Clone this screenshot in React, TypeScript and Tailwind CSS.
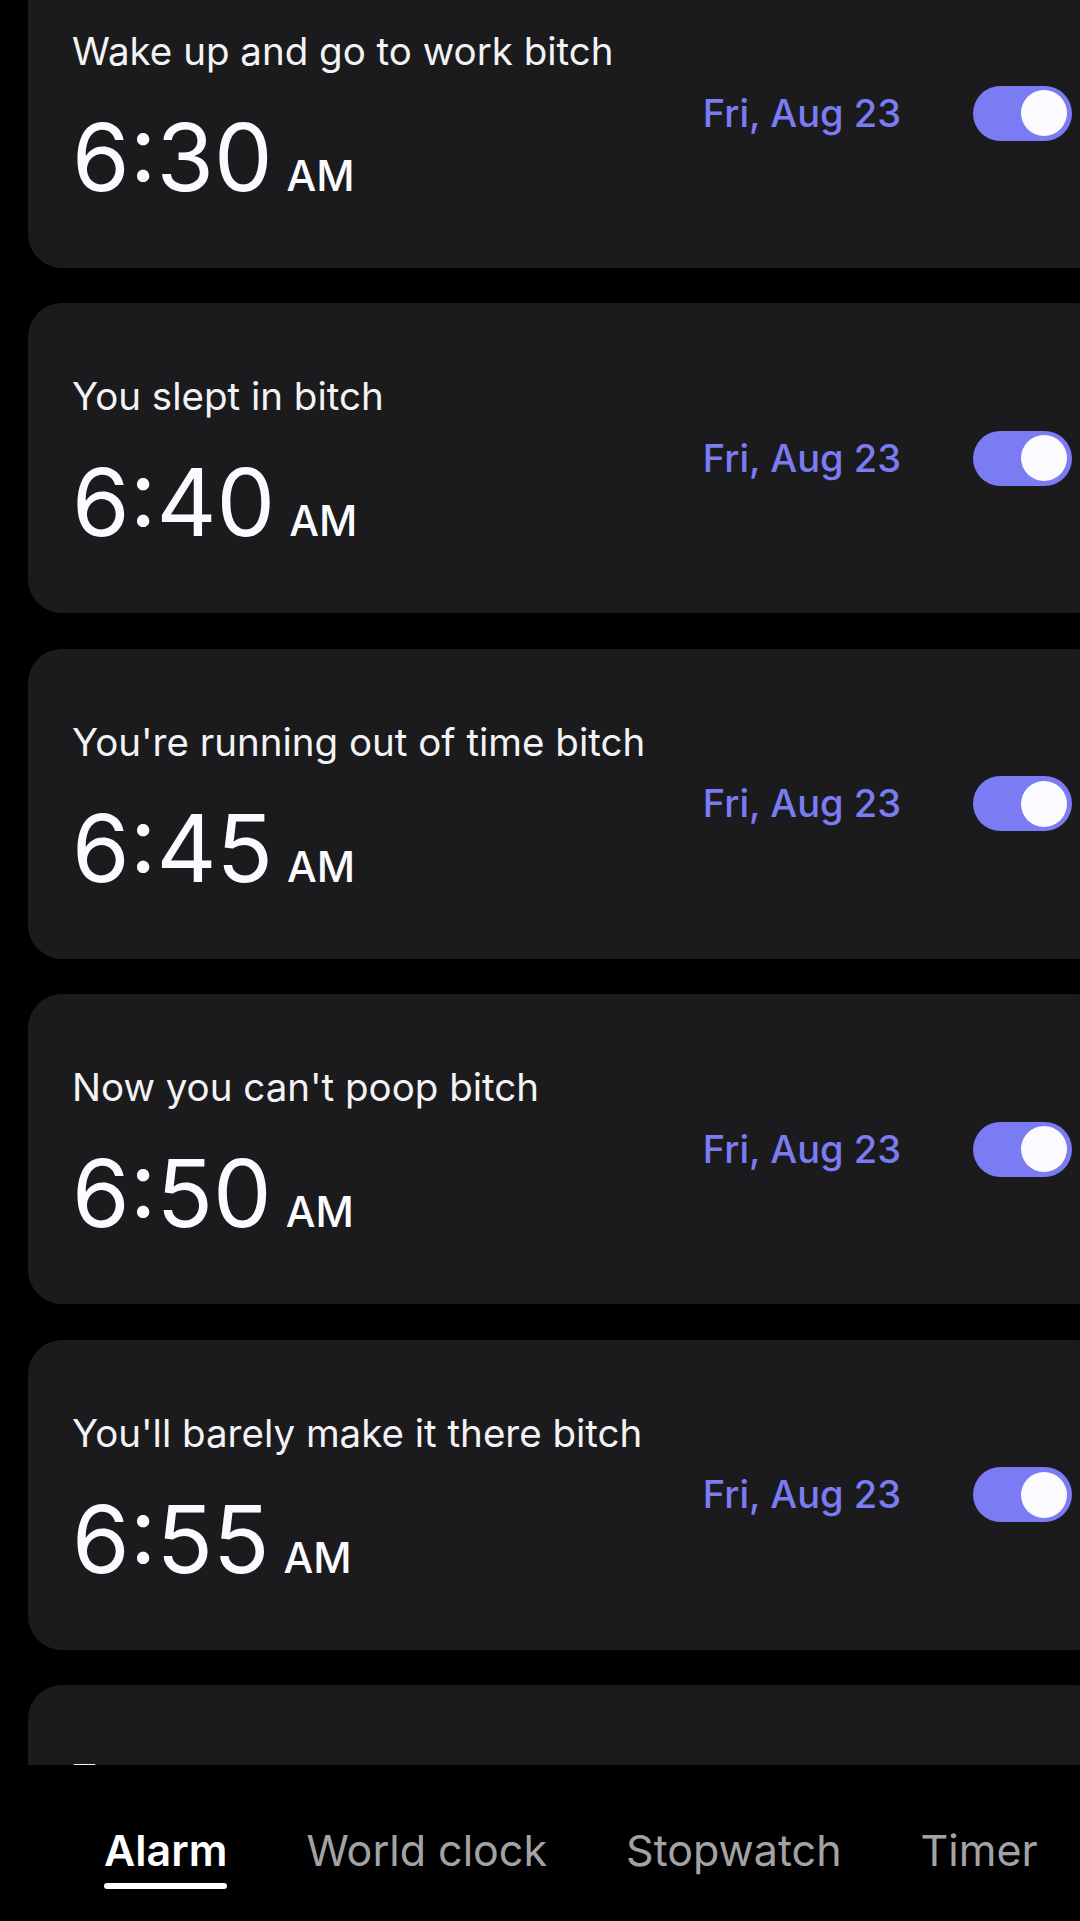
import { useState } from 'react';

type Alarm = {
  id: number;
  label: string;
  time: string;
  date: string;
  on: boolean;
};

const ALARMS: Alarm[] = [
  { id: 1, label: 'Wake up and go to work bitch', time: '6:30', date: 'Fri, Aug 23', on: true },
  { id: 2, label: 'You slept in bitch', time: '6:40', date: 'Fri, Aug 23', on: true },
  { id: 3, label: "You're running out of time bitch", time: '6:45', date: 'Fri, Aug 23', on: true },
  { id: 4, label: "Now you can't poop bitch", time: '6:50', date: 'Fri, Aug 23', on: true },
  { id: 5, label: "You'll barely make it there bitch", time: '6:55', date: 'Fri, Aug 23', on: true },
  { id: 6, label: 'Too many excuses', time: '7:00', date: 'Fri, Aug 23', on: true },
];

const TABS = ['Alarm', 'World clock', 'Stopwatch', 'Timer'];

function Toggle({ on, onChange }: { on: boolean; onChange: () => void }) {
  return (
    <button
      onClick={onChange}
      className={`flex h-[55px] w-[99px] shrink-0 items-center rounded-full px-[5px] ${
        on ? 'justify-end bg-[#7b7bf3]' : 'justify-start bg-[#55555a]'
      }`}
    >
      <span className="block h-[46px] w-[46px] rounded-full bg-[#fbfbff]" />
    </button>
  );
}

function AlarmCard({ alarm, onToggle }: { alarm: Alarm; onToggle: () => void }) {
  return (
    <div className="ml-[28px] flex h-[310px] w-[1080px] shrink-0 items-center rounded-[34px] bg-[#1b1b1e] pl-[44px] pr-[36px]">
      <div className="flex flex-1 flex-col self-start pt-[70px]">
        <div className="text-[38.5px] leading-[46px] text-[#f3f3f5]">{alarm.label}</div>
        <div className="mt-[36px] flex items-baseline text-[#fbfbff]">
          <span className="text-[93px] leading-[95px]">{alarm.time}</span>
          <span className="ml-[14px] text-[42px] font-medium">AM</span>
        </div>
      </div>
      <div className="mr-[72px] text-[38px] font-medium text-[#7b7cf2]">{alarm.date}</div>
      <Toggle on={alarm.on} onChange={onToggle} />
    </div>
  );
}

export default function App() {
  const [alarms, setAlarms] = useState(ALARMS);
  const [tab, setTab] = useState('Alarm');

  const toggle = (id: number) =>
    setAlarms((list) => list.map((a) => (a.id === id ? { ...a, on: !a.on } : a)));

  return (
    <div
      className="flex h-[1921px] w-[1080px] flex-col overflow-hidden bg-black"
      style={{ fontFamily: 'Inter, Roboto, "Noto Sans", sans-serif' }}
    >
      {/* scrolled alarm list */}
      <div className="h-[1765px] shrink-0 overflow-hidden">
        <div className="mt-[-42px] flex flex-col gap-[35.4px]">
          {alarms.map((a) => (
            <AlarmCard key={a.id} alarm={a} onToggle={() => toggle(a.id)} />
          ))}
        </div>
      </div>

      {/* bottom tabs */}
      <nav className="flex flex-1 items-start gap-[79px] pl-[104px] pt-[58px]">
        {TABS.map((t) => {
          const active = t === tab;
          return (
            <button key={t} onClick={() => setTab(t)} className="flex flex-col items-stretch">
              <span
                className={`text-[43px] leading-[54px] ${
                  active ? 'font-semibold text-white' : 'text-[#a3a3a6]'
                }`}
              >
                {t}
              </span>
              {active && <span className="mt-[6px] h-[6px] rounded-full bg-white" />}
            </button>
          );
        })}
      </nav>
    </div>
  );
}
